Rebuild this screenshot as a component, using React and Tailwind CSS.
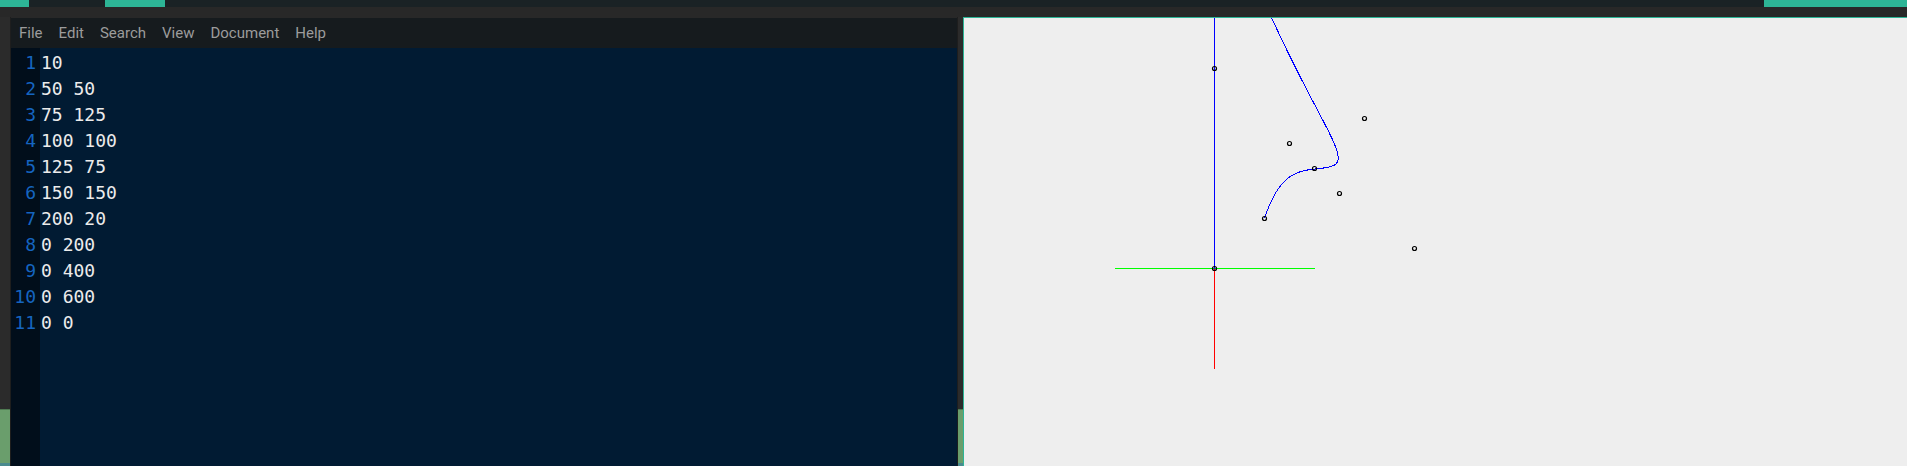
import React from 'react';

const menuItems = ['File', 'Edit', 'Search', 'View', 'Document', 'Help'];

const lines = ['10', '50 50', '75 125', '100 100', '125 75', '150 150', '200 20', '0 200', '0 400', '0 600', '0 0'];

// control points parsed from the editor text (first line is the count)
const points = lines.slice(1).map((l) => l.split(' ').map(Number));

// single bezier of degree n-1 through de Casteljau
function bezier(pts, samples) {
  const out = [];
  for (let s = 0; s <= samples; s++) {
    const t = s / samples;
    let d = pts.map((p) => [...p]);
    while (d.length > 1) {
      const next = [];
      for (let i = 0; i < d.length - 1; i++) {
        next.push([(1 - t) * d[i][0] + t * d[i + 1][0], (1 - t) * d[i][1] + t * d[i + 1][1]]);
      }
      d = next;
    }
    out.push(d[0]);
  }
  return out;
}

const OX = 250.5;
const OY = 250.5;

function Canvas() {
  const curve = bezier(points, 2000)
    .map(([x, y], i) => `${i === 0 ? 'M' : 'L'}${(OX + x).toFixed(2)} ${(OY - y).toFixed(2)}`)
    .join(' ');

  return (
    <svg width="943" height="448" className="block">
      <line x1={OX - 100} y1={OY} x2={OX + 100} y2={OY} stroke="#00ff00" strokeWidth="1" shapeRendering="crispEdges" />
      <line x1={OX} y1={OY} x2={OX} y2={OY + 100} stroke="#ff0000" strokeWidth="1" shapeRendering="crispEdges" />
      <line x1={OX} y1={OY} x2={OX} y2={OY - 300} stroke="#0000ff" strokeWidth="1" shapeRendering="crispEdges" />
      <path d={curve} fill="none" stroke="#0000ff" strokeWidth="1" shapeRendering="crispEdges" />
      {points.map(([x, y], i) => (
        <circle key={i} cx={OX + x} cy={OY - y} r="2" fill="none" stroke="#000" strokeWidth="1.2" />
      ))}
    </svg>
  );
}

function SideStrip({ width }) {
  return (
    <div className={`flex flex-col ${width}`}>
      <div className="flex-1 bg-[#2b2b2b]" />
      <div className="h-[54px] bg-[#6a9e6c] border-t border-[#4f7a52]" />
      <div className="h-[3px] bg-[#4a8a8e]" />
    </div>
  );
}

export default function App() {
  return (
    <div className="w-[1907px] h-[466px] overflow-hidden flex flex-col bg-[#282828]">
      {/* top bar */}
      <div className="h-[7px] flex bg-[#1a2225]">
        <div className="w-[29px] bg-[#2db596]" />
        <div className="w-[76px]" />
        <div className="w-[60px] bg-[#2db596]" />
        <div className="flex-1" />
        <div className="w-[143px] bg-[#2db596]" />
      </div>
      <div className="h-[10px]" />

      <div className="flex-1 flex min-h-0">
        <SideStrip width="w-[10px]" />
        <div className="w-px bg-[#1e1e1e]" />

        {/* editor */}
        <div className="w-[946px] flex flex-col pt-px">
          <div className="h-[30px] flex items-center bg-[#161b1e] text-[15px] text-[#9c9c9c]" style={{ fontFamily: 'Roboto, "Noto Sans", sans-serif' }}>
            {menuItems.map((m) => (
              <span key={m} className="px-2 leading-none">{m}</span>
            ))}
          </div>
          <div className="flex-1 flex bg-[#011b33] text-[18px] leading-[26px]" style={{ fontFamily: '"DejaVu Sans Mono", monospace' }}>
            <div className="w-[29px] bg-[#010e1b] pt-[2px] pr-[4px] text-right text-[#1565c0]">
              {lines.map((_, i) => (
                <div key={i}>{i + 1}</div>
              ))}
            </div>
            <div className="pt-[2px] pl-[1px] text-[#ececec] whitespace-pre">
              {lines.map((l, i) => (
                <div key={i}>{l}</div>
              ))}
            </div>
          </div>
        </div>

        <div className="w-px bg-[#1e1e1e]" />
        <SideStrip width="w-[5px]" />

        {/* drawing */}
        <div className="flex-1 border-l border-t border-[#2db596] bg-[#eeeeee] overflow-hidden">
          <Canvas />
        </div>
      </div>
    </div>
  );
}
